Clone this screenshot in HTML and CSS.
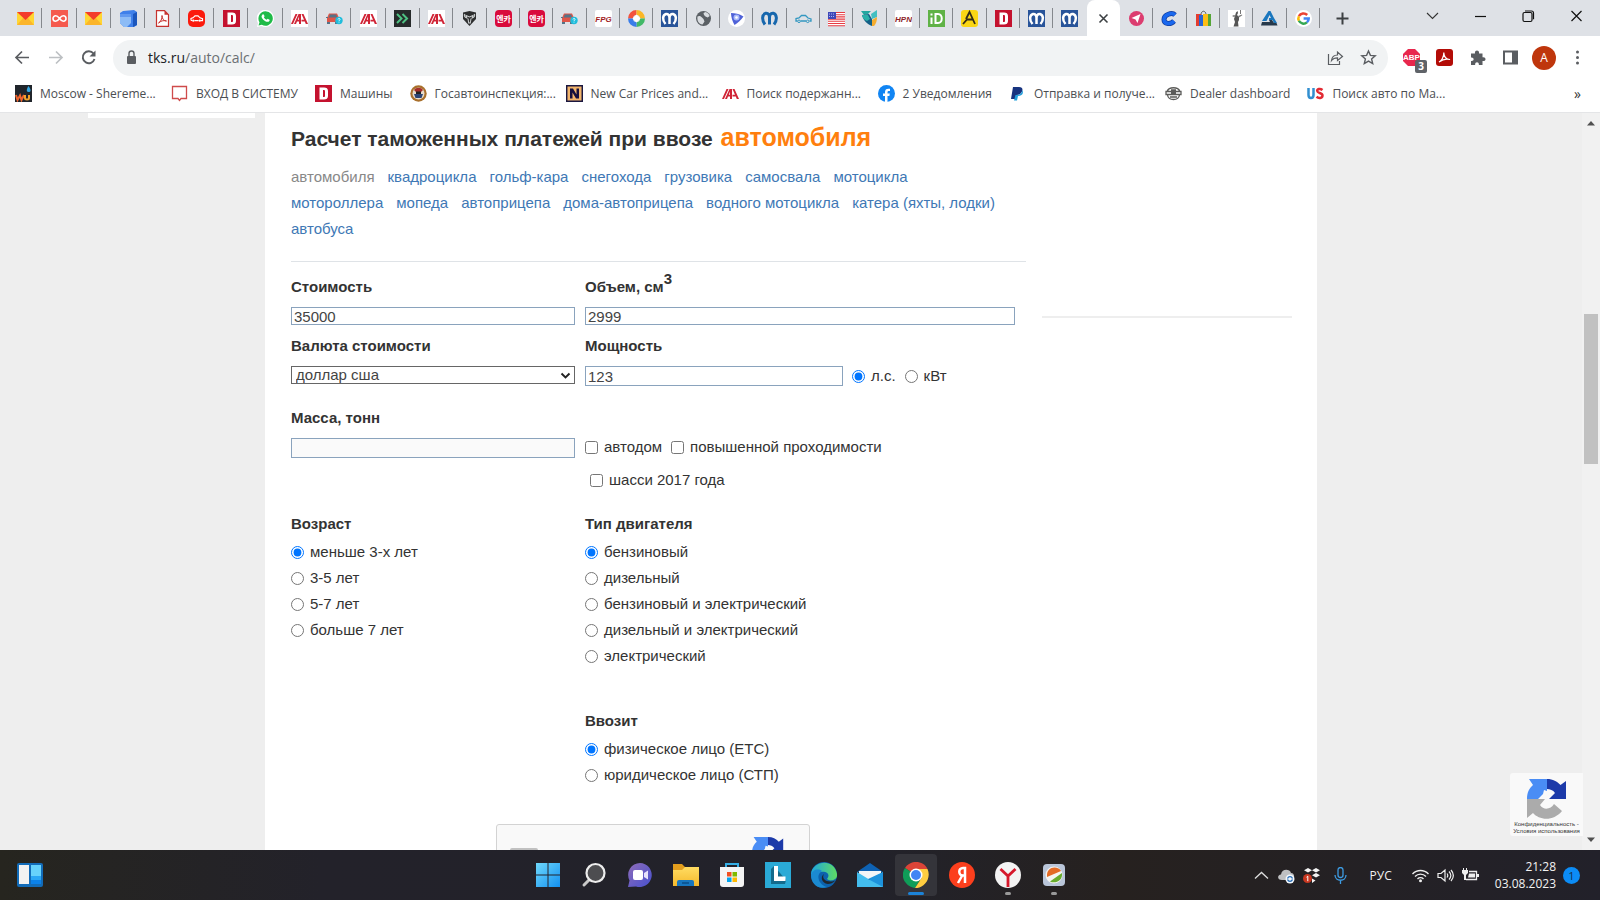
FILE: index.html
```html
<!DOCTYPE html>
<html lang="ru">
<head>
<meta charset="utf-8">
<title>Расчет таможенных платежей</title>
<link rel="stylesheet" href="styles.css">
</head>
<body>
<svg class="gradients" aria-hidden="true">
  <defs>
    <linearGradient id="gblue" x1="0" y1="0" x2="1" y2="1"><stop offset="0" stop-color="#6fd8fb"/><stop offset="1" stop-color="#1390f0"/></linearGradient>
    <linearGradient id="gedge" x1="0" y1="0" x2="1" y2="0"><stop offset="0" stop-color="#1fa6dd"/><stop offset="1" stop-color="#5fdc62"/></linearGradient>
    <linearGradient id="gchat" x1="0" y1="0" x2="1" y2="1"><stop offset="0" stop-color="#8f6cb8"/><stop offset="1" stop-color="#4650cf"/></linearGradient>
    <linearGradient id="gfold" x1="0" y1="0" x2="0" y2="1"><stop offset="0" stop-color="#ffdc62"/><stop offset="1" stop-color="#f5b92c"/></linearGradient>
  </defs>
</svg>
<svg class="sprite" aria-hidden="true">
  <symbol id="mail" viewBox="0 0 17 17"><path fill="#ffd633" d="M0 2h17v13H0z"/><path fill="#fbb52b" d="M0 15 6 8h5l6 7z"/><path fill="#f33c2b" d="M0 2h17L8.500 10z"/></symbol>
  <symbol id="loop" viewBox="0 0 17 17"><path fill="#f55a4e" d="M0 0h17v17H0z"/><path fill="none" stroke="#fff" stroke-width="1.600" d="M8.500 8.500C7 6.500 6 5.800 4.700 5.800a2.700 2.700 0 0 0 0 5.400c1.300 0 2.300-.7 3.800-2.700s2.500-2.700 3.800-2.700a2.700 2.700 0 0 1 0 5.400c-1.300 0-2.300-.7-3.800-2.700z"/></symbol>
  <symbol id="bluebox" viewBox="0 0 17 17"><path fill="#3f80ea" d="M3 1 14 0l3 2v13l-3 2H4l-4-4V3z"/><path fill="#1c57bd" d="M13 4 17 2v13l-4 2z"/><path fill="#8dbcf6" d="M0 4h11v9L7 17H4l-4-4z"/><path fill="#6099f0" d="M0 4h11v3H0z"/></symbol>
  <symbol id="pdf" viewBox="0 0 17 17"><path fill="#fff" stroke="#c6322e" stroke-width="1.200" d="M2.500.7h8l4 4v11.600h-12z"/><path fill="#c6322e" d="M10.500.7v4h4z"/><path fill="none" stroke="#c6322e" d="M4.500 13c2-1 4-4.500 3.500-7.500C8 9 10 11 12.500 11 9 10 7 11 4.500 13z"/></symbol>
  <symbol id="redcar" viewBox="0 0 17 17"><rect width="17" height="17" rx="5" fill="#fb1a0d"/><path fill="none" stroke="#fff" stroke-width="1.200" d="M3 10.500V8.500l2-.7 2-2h3l2 2 2.500.8v2H13m-2.500 0h-4M3 10.500h1"/><circle cx="5.300" cy="10.600" r="1.200" fill="#fff"/><circle cx="11.800" cy="10.600" r="1.200" fill="#fff"/></symbol>
  <symbol id="dee" viewBox="0 0 17 17"><path fill="#c4122f" d="M0 0h17v17H0z"/><path fill="#fff" fill-rule="evenodd" d="M4.500 2.500H9c2.500 0 4 1 4 3.500v5c0 2.500-1.500 3.500-4 3.500H4.500zM8 5v7h.8c1 0 1.200-.5 1.200-1.500v-4C10 5.500 9.800 5 8.800 5z"/></symbol>
  <symbol id="whats" viewBox="0 0 17 17"><path fill="#fff" d="M8.500 0a8.500 8.500 0 1 1-4 16L0 17l1-4A8.500 8.500 0 0 1 8.500 0z"/><path fill="#1fbb48" d="M8.500 1.200a7.300 7.300 0 1 1-3.700 13.600l-3.300.7 1-3.200A7.300 7.300 0 0 1 8.500 1.200z"/><path fill="#fff" d="M5.500 4.500c.6-.6 1.200-.4 1.500.4l.6 1.300-.7 1c.5 1.200 1.500 2 2.700 2.600l1-1.100 1.900 1c.6.400-.3 1.800-1.200 2C8.500 12.500 4 8.500 4.600 6z"/></symbol>
  <symbol id="iaa" viewBox="0 0 17 17"><path fill="#fff" d="M0 0h17v17H0z"/><path fill="#d02436" d="M0 14 4.500 4H6.500L2 14zM3 14 7.500 4H10v10H8v-2.500H6L5 14zM6.800 9.800H8V6.800zM10.500 4h2L17 14h-2.200l-1-2.500h-3.300V9.800H13z"/></symbol>
  <symbol id="carq" viewBox="0 0 17 17"><path fill="#df5548" d="M1 8 3 3.500h8L13 8v4H1z"/><path fill="#557388" d="M0 7h2v1H0zM3.800 4.500h6.400l1 3H2.800zM1 12h3v2H1zM9 12h3v2H9z"/><circle cx="13" cy="10.500" r="3.700" fill="#20bddc"/><path stroke="#e9fbff" fill="none" d="M12 9.500c0-1.500 2.200-1.300 2 0-.1.700-1 .7-1 1.500m0 .7v.8"/></symbol>
  <symbol id="arrows" viewBox="0 0 17 17"><path fill="#262a2b" d="M0 0h17v17H0z"/><path fill="none" stroke="#4ec183" stroke-width="2" d="m3 4 4.500 4.500L3 13M8.500 4 13 8.500 8.500 13"/></symbol>
  <symbol id="ram" viewBox="0 0 17 17"><path fill="#2d2e2f" d="M2 2.500 8.500 1 15 2.500v6.500l-6.500 7L2 9z"/><path fill="none" stroke="#c9cccd" stroke-width="1.100" d="M3.500 4c-.5 2 .8 3.500 2.300 4L5 5.500 8.500 7 12 5.500 11.200 8c1.500-.5 2.800-2 2.300-4M7 8.500l.7 4.500h1.600l.7-4.500"/></symbol>
  <symbol id="encar" viewBox="0 0 17 17"><rect width="17" height="17" rx="4" fill="#d90b3c"/><text x="8.500" y="11.500" font-size="8" font-weight="700" fill="#fff" text-anchor="middle" font-family="Noto Sans CJK KR, sans-serif">엔카</text></symbol>
  <symbol id="fpg" viewBox="0 0 17 17"><rect width="17" height="17" rx="2" fill="#fff"/><text x="8.500" y="11.500" font-size="8" font-weight="700" font-style="italic" fill="#a1201c" text-anchor="middle" font-family="Liberation Sans, sans-serif">FPG</text></symbol>
  <symbol id="ring" viewBox="0 0 17 17"><g fill="none" stroke-width="5"><path stroke="#f3523e" d="M2.500 8.500a6 6 0 0 1 6-6"/><path stroke="#fbb727" d="M8.500 2.500a6 6 0 0 1 6 6"/><path stroke="#42b968" d="M14.500 8.500a6 6 0 0 1-6 6"/><path stroke="#397de9" d="M8.500 14.500a6 6 0 0 1-6-6"/></g><path fill="#fff" d="m8.500 4.500 4 4-4 4-4-4z"/></symbol>
  <symbol id="mopar" viewBox="0 0 17 17"><path fill="#28549a" d="M0 0h17v17H0z"/><path fill="none" stroke="#fff" stroke-width="2.500" d="M4.500 14C1 10 1.500 5 5 4c2.300-.3 3.500 1.500 3.500 4v6V8c0-2.500 1.200-4.300 3.500-4 3.500 1 4 6 .5 10"/></symbol>
  <symbol id="moparb" viewBox="0 0 17 17"><path fill="none" stroke="#1767ad" stroke-width="3" d="M4 14.500C.5 10 1 4.500 4.800 3.200 7.500 2.900 8.500 5 8.500 8v6.500V8c0-3 1-5.100 3.700-4.800 3.800 1.300 4.300 6.800.8 11.300"/></symbol>
  <symbol id="globe" viewBox="0 0 17 17"><circle cx="8.500" cy="8.500" r="7.500" fill="#5b6065"/><path fill="#d9dce0" d="M2.500 6.500C4 5.500 6 6 7 7.500l1.500 1.500 1 2.500-2 3C4 14 1.800 11 2.500 6.500zM8.500 3l2-1c2.500.7 3.500 2 4.200 4l-2 1.500-2.200-1L9 5z"/></symbol>
  <symbol id="trib" viewBox="0 0 17 17"><circle cx="8.500" cy="8.500" r="8.500" fill="#fff"/><path fill="#4f62d8" d="M3 3c4 0 8 .5 12.500 3.500C13 10 10 13 6.500 15 4.500 11.500 3 7 3 3z"/><circle cx="8.500" cy="7.500" r="3" fill="#a9bafa"/><circle cx="8.500" cy="7.500" r="1.300" fill="#fff"/></symbol>
  <symbol id="carout" viewBox="0 0 17 17"><path fill="none" stroke="#3498c1" stroke-width="1.300" d="M2.500 11H1V8.500L4 8l2.500-2.500h4L13 8l3 1v2h-1.500M5.500 11H11"/><circle cx="4" cy="11.300" r="1.300" fill="none" stroke="#3498c1"/><circle cx="12.700" cy="11.300" r="1.300" fill="none" stroke="#3498c1"/></symbol>
  <symbol id="flag" viewBox="0 0 17 17"><path fill="#fff" d="M0 2h17v14H0z"/><path stroke="#e63b43" stroke-width="1.100" d="M0 2.500h17M0 4.700h17M0 6.900h17M0 9.100h17M0 11.300h17M0 13.500h17M0 15.700h17"/><path fill="#3e48b9" d="M0 2h8v7H0z"/><path stroke="#aeb4ee" stroke-dasharray="1 1" d="M1 4h6M1 6.500h6"/></symbol>
  <symbol id="leaf" viewBox="0 0 17 17"><path fill="#24a7a0" d="M0 1h10L7 4 3 5z"/><path fill="#42bfc1" d="M10 4 16 0v7l-5 2z"/><path fill="#135f86" d="M1 5 8 4l3 5v7C6 14 2 10 1 5z"/><path fill="#2bb0a8" d="M1 5h6l2 4-3 2C3 10 1.500 8 1 5z"/><path fill="#f5ad30" d="m11 10 5-3c0 4-1 7-3 9h-2z"/></symbol>
  <symbol id="hpn" viewBox="0 0 17 17"><rect width="17" height="17" rx="2" fill="#fff"/><text x="8.500" y="11.500" font-size="8" font-weight="700" font-style="italic" fill="#8d2228" text-anchor="middle" font-family="Liberation Sans, sans-serif">HPN</text></symbol>
  <symbol id="idd" viewBox="0 0 17 17"><path fill="#5fb246" d="M0 0h17v17H0z"/><path fill="none" stroke="#fff" stroke-width="2" d="M3.500 7.500V14M3.500 3.500v2M7.500 4v9H10c5 0 5-9 0-9H6.500"/></symbol>
  <symbol id="aye" viewBox="0 0 17 17"><rect width="17" height="17" rx="3" fill="#fad615"/><path fill="none" stroke="#322b18" stroke-width="1.800" d="M2 14 6 9.500h6M5 9 8.500 2 14 14"/></symbol>
  <symbol id="pink" viewBox="0 0 17 17"><circle cx="8.500" cy="8.500" r="7.500" fill="#dc3d70"/><path fill="#fff" d="m3.500 8 9-4-3 9-2-3.500z"/></symbol>
  <symbol id="cee" viewBox="0 0 17 17"><path fill="none" stroke="#113c9c" stroke-width="5" d="M14 5c-3-3-11-.5-11 4.500S10 14.500 13 11"/><path fill="none" stroke="#1a68ee" stroke-width="3.500" d="M14 5c-3-3-11-.5-11 4.500S10 14.500 13 11"/></symbol>
  <symbol id="bags" viewBox="0 0 17 17"><path fill="none" stroke="#555" d="M6 5c0-5 5-5 5 0"/><path fill="#e43d30" d="M1 4h5v12H1z"/><path fill="#2664d5" d="M4 5h5v11H4z"/><path fill="#fdbd15" d="M8 4h5v12H8z"/><path fill="#54a536" d="M13 4h3v12h-3z"/></symbol>
  <symbol id="statue" viewBox="0 0 17 17"><path fill="#fff" d="M0 0h17v17H0z"/><path fill="#555" d="M8 2.500 9.500 1l.5 2-1 2 2 2v3l-1 2 .5 4.500h-5L7 12 6 9l1-3z"/><path fill="#777" d="m4 6 2-1 2 1-2 1zM10 6l4-1.500.3.700L11 7.500zM12 0h1v4h-1z"/></symbol>
  <symbol id="tri" viewBox="0 0 17 17"><path fill="#1b77be" d="M7.500 1h2L13 8h-3L8.500 5 5.500 11H1z"/><path fill="#1b77be" d="M8 8h5l3 5h-3l-1.500-3H8z"/><path fill="#26394b" d="M1 12h8l-1-2h3l2 3h2.500l1 2.500H0z"/></symbol>
  <symbol id="goog" viewBox="0 0 17 17"><circle cx="8.500" cy="8.500" r="8.500" fill="#fff"/><g fill="none" stroke-width="2.500"><path stroke="#ea4335" d="M3.900 6.200A5.200 5.200 0 0 1 12.200 5"/><path stroke="#fbbc05" d="M3.900 6.200a5.200 5.200 0 0 0 0 4.600"/><path stroke="#34a853" d="M3.900 10.800a5.200 5.200 0 0 0 8 1.600"/><path stroke="#4285f4" d="M11.900 12.400a5.200 5.200 0 0 0 1.800-3.800H8.600"/></g></symbol>
  <symbol id="wu" viewBox="0 0 17 17"><path fill="#20252b" d="M0 0h17v17H0z"/><path fill="none" stroke="#f0642d" stroke-width="2" d="m1 10 1.500 5L5 10.500 6.500 15 9 10"/><path fill="none" stroke="#f3a22b" stroke-width="2" d="M10 10v3c0 2 4 2 4 0v-3"/><path fill="#32a8e4" d="M13.500 1c3 4 2.500 6 0 6s-2-3 0-6z"/></symbol>
  <symbol id="frame" viewBox="0 0 17 17"><path fill="#fff" stroke="#cf4b4b" stroke-width="1.300" d="M1.500 1.500h14v12H10l-1.500 2-1.500-2H1.500z"/></symbol>
  <symbol id="gai" viewBox="0 0 17 17"><circle cx="8.500" cy="8.500" r="8.200" fill="#a9702c"/><circle cx="8.500" cy="8.500" r="6" fill="#e8dccc"/><path fill="#a52e2b" d="M4 5c2-3 7-3 9 0l-2 2H6z"/><path fill="#2c4575" d="M4 9h9l-1.500 4h-6z"/><path fill="#222" d="M6 6.500h5V9H6z"/></symbol>
  <symbol id="nbox" viewBox="0 0 17 17"><path fill="#f2b56c" stroke="#1a1740" stroke-width="1.500" d="M.7.7h15.600v15.600H.7z"/><path fill="#14103e" d="M4 3.500h3l3.500 6v-6H13v10h-3l-3.500-6v6H4z"/></symbol>
  <symbol id="face" viewBox="0 0 17 17"><circle cx="8.500" cy="8.500" r="8.500" fill="#1185f3"/><path fill="#fff" d="M7 17v-6H5V8.500h2V7c0-2.500 1.500-3.700 5-3.200V6c-1.800-.2-2.500.2-2.500 1.400v1.100h2.300L11.400 11H9.500v6z"/></symbol>
  <symbol id="pay" viewBox="0 0 17 17"><path fill="#17337f" d="M4 2h6c3.500 0 4 2 3 4.500S10 10 7.500 10L6.500 14H2z"/><path fill="#23a0dc" d="M13.500 5c1.500 4-1 6-4.500 6L8 15.500H5L6.500 10c4 0 6-1 7-5z"/></symbol>
  <symbol id="deal" viewBox="0 0 17 17"><path fill="none" stroke="#5c5c5a" stroke-width="1.300" d="M2 6.500C4 1.500 13 1.500 15 6.500M1 6.500h15v3H1zM2.500 10c1 6 11 6 12 0M5 12h7M6 5h5M6 8h5"/></symbol>
  <symbol id="us" viewBox="0 0 17 17"><path fill="none" stroke="#328fd0" stroke-width="2.500" d="M1.500 3v7c0 4 5 4 5 0V3"/><path fill="none" stroke="#e22a33" stroke-width="2.500" d="M15.500 5C13 3 10 4 10.200 6c.3 2.500 5.300 1.500 5.300 4.500 0 3-4 3-6 1.300"/></symbol>
  <symbol id="recap" viewBox="0 0 40 40"><path fill="#1c3aa9" d="M20 0c6 0 10 2.500 13.500 6L39 2v18H22l6-6c-2-3-5-4-8-4z"/><path fill="#4a8df5" d="M20 0v12l-3-1-1 4-5 5H0C0 13 2.500 9 6 6L2 0z"/><path fill="#ababab" d="M0 20h18l-5 6c4 6 11 4 14-1l8 7C26 43 12 41 6 34l-6 5z"/></symbol>
</svg>

<header class="browser">
  <div class="tabstrip">
    <div class="tabs tabs-early">
      <span class="tab"><svg><use href="#mail"/></svg></span>
      <span class="tab"><svg><use href="#loop"/></svg></span>
      <span class="tab"><svg><use href="#mail"/></svg></span>
      <span class="tab"><svg><use href="#bluebox"/></svg></span>
      <span class="tab"><svg><use href="#pdf"/></svg></span>
      <span class="tab"><svg><use href="#redcar"/></svg></span>
      <span class="tab"><svg><use href="#dee"/></svg></span>
      <span class="tab"><svg><use href="#whats"/></svg></span>
      <span class="tab"><svg><use href="#iaa"/></svg></span>
      <span class="tab"><svg><use href="#carq"/></svg></span>
      <span class="tab"><svg><use href="#iaa"/></svg></span>
      <span class="tab"><svg><use href="#arrows"/></svg></span>
    </div>
    <div class="tabs tabs-late">
      <span class="tab"><svg><use href="#iaa"/></svg></span>
      <span class="tab"><svg><use href="#ram"/></svg></span>
      <span class="tab"><svg><use href="#encar"/></svg></span>
      <span class="tab"><svg><use href="#encar"/></svg></span>
      <span class="tab"><svg><use href="#carq"/></svg></span>
      <span class="tab"><svg><use href="#fpg"/></svg></span>
      <span class="tab"><svg><use href="#ring"/></svg></span>
      <span class="tab"><svg><use href="#mopar"/></svg></span>
      <span class="tab"><svg><use href="#globe"/></svg></span>
      <span class="tab"><svg><use href="#trib"/></svg></span>
      <span class="tab"><svg><use href="#moparb"/></svg></span>
      <span class="tab"><svg><use href="#carout"/></svg></span>
      <span class="tab"><svg><use href="#flag"/></svg></span>
      <span class="tab"><svg><use href="#leaf"/></svg></span>
      <span class="tab"><svg><use href="#hpn"/></svg></span>
      <span class="tab"><svg><use href="#idd"/></svg></span>
      <span class="tab"><svg><use href="#aye"/></svg></span>
      <span class="tab"><svg><use href="#dee"/></svg></span>
      <span class="tab"><svg><use href="#mopar"/></svg></span>
      <span class="tab tab-last"><svg><use href="#mopar"/></svg></span>
      <button class="tab tab-active" aria-label="Закрыть вкладку"><svg viewBox="0 0 17 17"><path fill="none" stroke="#3c4043" stroke-width="1.600" d="m4.500 4.500 8 8m0-8-8 8"/></svg></button>
      <span class="tab"><svg><use href="#pink"/></svg></span>
      <span class="tab"><svg><use href="#cee"/></svg></span>
      <span class="tab"><svg><use href="#bags"/></svg></span>
      <span class="tab"><svg><use href="#statue"/></svg></span>
      <span class="tab"><svg><use href="#tri"/></svg></span>
      <span class="tab"><svg><use href="#goog"/></svg></span>
    </div>
    <button class="newtab" aria-label="Новая вкладка"><svg viewBox="0 0 17 17"><path stroke="#3c4043" stroke-width="2" d="M8.500 2.500v12m-6-6h12"/></svg></button>
    <div class="winctl">
      <button aria-label="Поиск вкладок"><svg viewBox="0 0 17 17"><path fill="none" stroke="#333" stroke-width="1.100" d="m3 5 5.500 5.500L14 5"/></svg></button>
      <button aria-label="Свернуть"><svg viewBox="0 0 17 17"><path stroke="#111" stroke-width="1.200" d="M3 8.500h11"/></svg></button>
      <button aria-label="Развернуть"><svg viewBox="0 0 17 17"><rect x="3" y="4.500" width="9" height="9" rx="1.500" fill="none" stroke="#111" stroke-width="1.200"/><path fill="none" stroke="#111" stroke-width="1.200" d="M5 3h6.500c1.300 0 2 .7 2 2v6.300"/></svg></button>
      <button aria-label="Закрыть"><svg viewBox="0 0 17 17"><path stroke="#111" stroke-width="1.200" d="m3.500 3 10 10m0-10-10 10"/></svg></button>
    </div>
  </div>

  <div class="toolbar">
    <button class="nav" aria-label="Назад"><svg viewBox="0 0 17 17"><path fill="none" stroke="#5a5d61" stroke-width="1.700" d="M15 8.500H2.500M8 2.500l-6 6 6 6"/></svg></button>
    <button class="nav" aria-label="Вперед"><svg viewBox="0 0 17 17"><path fill="none" stroke="#bdc0c3" stroke-width="1.700" d="M2 8.500h12.500M9 2.500l6 6-6 6"/></svg></button>
    <button class="nav" aria-label="Обновить"><svg viewBox="0 0 17 17"><path fill="none" stroke="#5a5d61" stroke-width="1.900" d="M13.500 4.500a6 6 0 1 0 1 5.500"/><path fill="#5a5d61" d="M15.500 1.500V7.500H9.500z"/></svg></button>
    <div class="omnibox">
      <svg viewBox="0 0 17 17"><rect x="4" y="7" width="9" height="8" rx="1" fill="#5a5d61"/><path fill="none" stroke="#5a5d61" stroke-width="1.400" d="M6 7V4.500a2.500 2.500 0 0 1 5 0V7"/></svg>
      <span class="url"><b>tks.ru</b>/auto/calc/</span>
      <button aria-label="Поделиться"><svg viewBox="0 0 17 17"><path fill="none" stroke="#5a5d61" stroke-width="1.200" d="M1.500 5v10.500h11V12M4.500 11.500c.5-4 3-5.500 6-5.500V3l5 4.500-5 4V8.800c-2.500 0-4.500.7-6 2.700z"/></svg></button>
      <button aria-label="В закладки"><svg viewBox="0 0 17 17"><path fill="none" stroke="#5a5d61" stroke-width="1.400" d="m8.500 2 1.900 4.400 4.800.4-3.600 3.100 1.100 4.700-4.200-2.500-4.200 2.500 1.100-4.700L1.800 6.800l4.800-.4z"/></svg></button>
    </div>
    <div class="extensions">
      <button aria-label="AdBlock"><svg viewBox="0 0 17 17"><path fill="#e8274d" d="M5 0h7l5 5v7l-5 5H5l-5-5V5z"/><text x="8.500" y="11" font-size="8" font-weight="700" fill="#fff" text-anchor="middle" font-family="Liberation Sans, sans-serif">ABP</text></svg><span class="count">3</span></button>
      <button aria-label="Acrobat"><svg viewBox="0 0 17 17"><rect width="17" height="17" rx="3" fill="#b30c07"/><path fill="none" stroke="#fff" stroke-width="1.200" d="M3 13c2.500-1 5-5 4.800-9.500C8 8 10 10.500 14 10.500c-3.500-1-8 .3-11 2.500z"/></svg></button>
      <button aria-label="Расширения"><svg viewBox="0 0 17 17"><path fill="#5a5d61" d="M2 4.500h4c-.8-4 4.800-4 4 0h3.500v3.800c4-.8 4 4.500 0 3.700v4H9.800c.8-3.700-4.400-3.700-3.600 0H2v-4c3.500.6 3.500-4 0-3.500z"/></svg></button>
      <button aria-label="Боковая панель"><svg viewBox="0 0 17 17"><path fill="#5a5d61" fill-rule="evenodd" d="M1 1.500h15v14H1zM3 3.500v10h7v-10z"/></svg></button>
      <button class="avatar">A</button>
      <button aria-label="Меню"><svg viewBox="0 0 17 17"><g fill="#5a5d61"><circle cx="8.500" cy="3" r="1.500"/><circle cx="8.500" cy="8.500" r="1.500"/><circle cx="8.500" cy="14" r="1.500"/></g></svg></button>
    </div>
  </div>

  <nav class="bookmarks">
    <a class="cut" href="#"><svg><use href="#wu"/></svg>Moscow - Shereme...</a>
    <a href="#"><svg><use href="#frame"/></svg>ВХОД В СИСТЕМУ</a>
    <a href="#"><svg><use href="#dee"/></svg>Машины</a>
    <a class="cut" href="#"><svg><use href="#gai"/></svg>Госавтоинспекция:...</a>
    <a class="cut" href="#"><svg><use href="#nbox"/></svg>New Car Prices and...</a>
    <a class="cut" href="#"><svg><use href="#iaa"/></svg>Поиск подержанн...</a>
    <a href="#"><svg><use href="#face"/></svg>2 Уведомления</a>
    <a class="cut" href="#"><svg><use href="#pay"/></svg>Отправка и получе...</a>
    <a href="#"><svg><use href="#deal"/></svg>Dealer dashboard</a>
    <a class="cut" href="#"><svg><use href="#us"/></svg>Поиск авто по Ма...</a>
    <button class="more">»</button>
  </nav>
</header>

<div class="viewport">
  <div class="page">
    <aside class="side"><div class="side-card"></div></aside>
    <main class="sheet">
      <div class="calc">
        <h1>Расчет таможенных платежей при ввозе <em>автомобиля</em></h1>
        <nav class="kinds">
          <span>автомобиля</span>
          <a href="#">квадроцикла</a>
          <a href="#">гольф-кара</a>
          <a href="#">снегохода</a>
          <a href="#">грузовика</a>
          <a href="#">самосвала</a>
          <a href="#">мотоцикла</a>
          <a href="#">мотороллера</a>
          <a href="#">мопеда</a>
          <a href="#">автоприцепа</a>
          <a href="#">дома-автоприцепа</a>
          <a href="#">водного мотоцикла</a>
          <a href="#">катера (яхты, лодки)</a>
          <a href="#">автобуса</a>
        </nav>
        <form class="form">
          <div class="field">
            <label class="title" for="cost">Стоимость</label>
            <input class="box" id="cost" type="text" value="35000">
          </div>
          <div class="field">
            <label class="title" for="volume">Объем, см<sup>3</sup></label>
            <input class="box" id="volume" type="text" value="2999">
          </div>
          <div class="field">
            <label class="title" for="currency">Валюта стоимости</label>
            <div class="picker">
              <select class="box" id="currency"><option>доллар сша</option></select>
              <svg viewBox="0 0 17 17"><path fill="none" stroke="#222" stroke-width="1.900" d="m4.500 6.500 4 4 4-4"/></svg>
            </div>
          </div>
          <div class="field">
            <label class="title" for="power">Мощность</label>
            <div class="inline">
              <input class="box tall power" id="power" type="text" value="123">
              <label class="opt"><input type="radio" name="unit" checked>л.с.</label>
              <label class="opt"><input type="radio" name="unit">кВт</label>
            </div>
          </div>
          <div class="field mass">
            <label class="title" for="mass">Масса, тонн</label>
            <input class="box tall" id="mass" type="text" disabled>
          </div>
          <div class="field checks">
            <div class="inline">
              <label class="opt"><input type="checkbox">автодом</label>
              <label class="opt"><input type="checkbox">повышенной проходимости</label>
            </div>
            <label class="opt chassis"><input type="checkbox">шасси 2017 года</label>
          </div>
          <fieldset class="group">
            <legend class="title">Возраст</legend>
            <label class="opt"><input type="radio" name="age" checked>меньше 3-х лет</label>
            <label class="opt"><input type="radio" name="age">3-5 лет</label>
            <label class="opt"><input type="radio" name="age">5-7 лет</label>
            <label class="opt"><input type="radio" name="age">больше 7 лет</label>
          </fieldset>
          <fieldset class="group">
            <legend class="title">Тип двигателя</legend>
            <label class="opt"><input type="radio" name="engine" checked>бензиновый</label>
            <label class="opt"><input type="radio" name="engine">дизельный</label>
            <label class="opt"><input type="radio" name="engine">бензиновый и электрический</label>
            <label class="opt"><input type="radio" name="engine">дизельный и электрический</label>
            <label class="opt"><input type="radio" name="engine">электрический</label>
          </fieldset>
          <fieldset class="group importer">
            <legend class="title">Ввозит</legend>
            <label class="opt"><input type="radio" name="who" checked>физическое лицо (ЕТС)</label>
            <label class="opt"><input type="radio" name="who">юридическое лицо (СТП)</label>
          </fieldset>
          <div class="captcha">
            <input type="checkbox" aria-label="Я не робот">
            <svg><use href="#recap"/></svg>
          </div>
        </form>
      </div>
      <aside class="ads"><hr></aside>
    </main>
  </div>
  <div class="recaptcha-badge">
    <svg><use href="#recap"/></svg>
    <p>Конфиденциальность -<br>Условия использования</p>
  </div>
  <div class="scrollbar">
    <svg viewBox="0 0 10 6"><path fill="#505050" d="M1 5.500h8L5 1z"/></svg>
    <div class="thumb"></div>
    <svg viewBox="0 0 10 6"><path fill="#505050" d="M1 .5h8L5 5z"/></svg>
  </div>
</div>

<footer class="taskbar">
  <button class="widgets" aria-label="Виджеты"><svg viewBox="0 0 26 24"><rect width="26" height="24" rx="2" fill="#126cb9"/><path fill="#f2f2f2" d="M2 2h10v19H2z"/><path fill="#67d2fb" d="M14 2h10v11H14z"/><path fill="#2aa7f5" d="M14 13h10v4H14z"/><path fill="#0b82ea" d="M14 17h10v4H14z"/></svg></button>
  <div class="apps">
    <button aria-label="Пуск"><svg viewBox="0 0 26 26"><path fill="url(#gblue)" d="M1 1h11.500v11.500H1zM13.500 1H25v11.500H13.500zM1 13.500h11.500V25H1zM13.500 13.500H25V25H13.500z"/></svg></button>
    <button aria-label="Поиск"><svg viewBox="0 0 26 26"><path stroke="#c9c9c9" stroke-width="3" stroke-linecap="round" d="m3 23 6-6"/><circle cx="14.500" cy="11" r="9" fill="#4d4d50" stroke="#ededed" stroke-width="2.200"/></svg></button>
    <button aria-label="Чат"><svg viewBox="0 0 26 26"><path fill="url(#gchat)" d="M13 1a12 12 0 1 1-4 23.400L1 25l1.500-6.500A12 12 0 0 1 13 1z"/><rect x="6" y="8" width="10" height="10" rx="2" fill="#fff"/><path fill="#e6e2fb" d="m17 11 4-2.500v9L17 15z"/></svg></button>
    <button aria-label="Проводник"><svg viewBox="0 0 26 26"><path fill="#e39e1d" d="M0 2h9l3 3h13v5H0z"/><path fill="url(#gfold)" d="M0 8h9l3-3h14v19H0z"/><path fill="#1776bf" d="M4 24v-4q0-2 2-2h13q2 0 2 2v4z"/><path fill="#0c5796" d="M9 20h7v2H9z"/></svg></button>
    <button aria-label="Магазин"><svg viewBox="0 0 26 26"><path fill="none" stroke="#35aee5" stroke-width="2" d="M7 6V2h12v4"/><path fill="#f4f4f4" d="M1 5h24v17q0 3-3 3H4q-3 0-3-3z"/><path fill="#f25022" d="M8 10h4.500v4.500H8z"/><path fill="#7fba00" d="M13.500 10H18v4.500h-4.500z"/><path fill="#00a4ef" d="M8 15.500h4.500V20H8z"/><path fill="#ffb900" d="M13.500 15.500H18V20h-4.500z"/></svg></button>
    <button aria-label="Lenovo"><svg viewBox="0 0 26 26"><path fill="#2aaad6" d="M0 0h26v26H0z"/><path fill="#136b8c" d="m9 4-3 3v15h14l1-4z"/><path fill="#fff" d="M9 4h4v10.500h7.500V19H9z"/></svg></button>
    <button aria-label="Edge"><svg viewBox="0 0 26 26"><circle cx="13" cy="13" r="13" fill="#0c62ad"/><path fill="url(#gedge)" d="M0 12C1-1 23-5 26 12c1 6-7 8-10 5 4-5-1-8-6-7S1 14 0 12z"/><path fill="#1b8ad1" d="M0 13c1-5 7-7 11-4-7 4-3 14 5 16C6 28 0 21 0 13z"/><path fill="#20272c" d="M13 12c-3 5 3 9 10 7 0-.5.5 0 .8 0-2 2-4 3-7 3-6-1-8-7-3.800-10z"/></svg></button>
    <button aria-label="Почта"><svg viewBox="0 0 26 26"><path fill="#0e62b3" d="M0 10 13 1l13 9z"/><path fill="#f2f5f7" d="M2 9h22v8H2z"/><path fill="#43bdee" d="M0 10l13 8 13-8v15H0z"/><path fill="#1d93dd" d="M26 10v15L11 17z"/></svg></button>
    <button class="app-active" aria-label="Chrome"><svg viewBox="0 0 26 26"><path fill="#db4437" d="M13 13 2 6C8-3 21-1 24.500 7z"/><path fill="#0f9d58" d="M13 13 2 6c-6 9 1 19 10 20l6-10z"/><path fill="#ffcd40" d="M13 7h11.500C29 17 20 27 12 26l6.500-10z"/><circle cx="13" cy="13" r="6.500" fill="#fff"/><circle cx="13" cy="13" r="5" fill="#4285f4"/></svg><i></i></button>
    <button aria-label="Яндекс"><svg viewBox="0 0 26 26"><circle cx="13" cy="13" r="13" fill="#fc3f1d"/><path fill="none" stroke="#fff" stroke-width="2.500" d="M16 21V6h-2c-5 0-5 7.500 0 7.500h2M13.500 13 9 21"/></svg></button>
    <button class="app-open" aria-label="Яндекс Браузер"><svg viewBox="0 0 26 26"><circle cx="13" cy="13" r="13" fill="#f3f3f3"/><path fill="none" stroke="#d6182b" stroke-width="2.800" d="m5.500 7 7.500 7 7.500-7M13 14v11"/></svg><i></i></button>
    <button class="app-open" aria-label="Браузер"><svg viewBox="0 0 26 26"><rect x="2" y="2" width="22" height="22" rx="4" fill="#b9c5d9"/><circle cx="13" cy="13" r="8.500" fill="#f4f4f1"/><path fill="#e36b26" d="M6 15C5 3 18 4 20 9z"/><path fill="#67ac2d" d="M9 19.500 21 11c1 8-7 11-12 8.500z"/></svg><i></i></button>
  </div>
  <div class="tray">
    <button aria-label="Скрытые значки"><svg viewBox="0 0 17 17"><path fill="none" stroke="#ddd" stroke-width="1.300" d="m2 11.500 6.500-6 6.500 6"/></svg></button>
    <button aria-label="OneDrive"><svg viewBox="0 0 17 17"><path fill="#bfc0c2" d="M4 13C-1 13-1 8 3 7.500 4 1 12 2 13 6c4 0 4 6 1 7z"/><circle cx="12" cy="12" r="4.500" fill="#f4f8fc"/><path fill="none" stroke="#2169b4" stroke-width="1.300" d="M9.500 11.500c1-2.500 4-2.500 5 0m0 1c-1 2.500-4 2.500-5 0"/></svg></button>
    <button aria-label="Dropbox"><svg viewBox="0 0 17 17"><path fill="#f4f4f4" d="m5 1 4 2.300L5 5.600 1 3.300zM13 1l4 2.300-4 2.300-4-2.300zM13 6l4 2.300-4 2.300-4-2.300zM9 11.500l3.500 2L9 16z"/><circle cx="4.500" cy="11.500" r="4.500" fill="#c73720"/><path fill="none" stroke="#fff" d="m3.500 10.200 1.300-1v5"/></svg></button>
    <button class="mic" aria-label="Микрофон"><svg viewBox="0 0 17 17"><rect x="6" y="0.500" width="5" height="10" rx="2.500" fill="none" stroke="#3d9be2" stroke-width="1.300"/><path fill="none" stroke="#3d9be2" stroke-width="1.300" d="M3 8c0 7 11 7 11 0M8.500 13.500V17"/></svg></button>
    <span class="lang">РУС</span>
    <button class="status" aria-label="Сеть и звук">
      <svg viewBox="0 0 17 17"><g fill="none" stroke="#eee" stroke-width="1.400"><path d="M.5 7c4.500-4.700 11.500-4.700 16 0M3 9.500c3-3.200 8-3.200 11 0M5.500 12c1.700-1.700 4.300-1.700 6 0"/></g><circle cx="8.500" cy="13.700" r="1.500" fill="#eee"/></svg>
      <svg viewBox="0 0 17 17"><path fill="none" stroke="#eee" stroke-width="1.200" d="M1 6.500h3L8 3v11l-4-3.500H1zM10 6.500c1 1.300 1 2.700 0 4M12 4.500c2.300 2.500 2.300 5.500 0 8M14 3c3 3.500 3 7.500 0 11"/></svg>
      <svg viewBox="0 0 17 17"><path fill="#eee" d="M0 3h6v3L4 8v5H2V8L0 6z"/><path stroke="#eee" d="M1.500 1v2M4.500 1v2"/><path fill="none" stroke="#eee" stroke-width="1.300" d="M7 4.500h7.500v8H4"/><path fill="#eee" d="M7 6.500h6v4H6zM15 7h2v3h-2z"/></svg>
    </button>
    <time class="clock">21:28<br>03.08.2023</time>
    <span class="alerts">1</span>
  </div>
</footer>
</body>
</html>
```

FILE: styles.css
```css
* { box-sizing: border-box; }

body {
  margin: 0;
  height: 100vh;
  display: flex;
  flex-direction: column;
  overflow: hidden;
  font-family: "Liberation Sans", Arial, sans-serif;
  font-size: 15px;
  color: #333;
}

button {
  padding: 0;
  border: 0;
  background: none;
  color: inherit;
  font: inherit;
  display: flex;
  align-items: center;
  justify-content: center;
}

svg { display: block; width: 17px; height: 17px; flex: none; }
.gradients { position: absolute; width: 0; height: 0; }
.sprite { display: none; }

/* Browser frame */
.browser {
  flex: none;
  background: #fff;
  border-bottom: 1px solid #e4e5e7;
  font-family: "Open Sans", "Noto Sans", sans-serif;
}

.tabstrip {
  display: flex;
  height: 36px;
  padding-left: 8px;
  background: #dee1e6;
}
.tabs { display: flex; }
.tabs-early { flex: 412 1 0; }
.tabs-late { flex: 900 1 0; }
.tab {
  flex: 1 1 0;
  min-width: 0;
  display: flex;
  align-items: center;
  justify-content: center;
  background: linear-gradient(#85888d, #85888d) right 8px / 1px 20px no-repeat;
}
.tab-last { background: none; }
.tab-active { background: #fff; border-radius: 8px 8px 0 0; }
.newtab { width: 44px; }
.winctl { display: flex; padding-left: 44px; }
.winctl button { width: 48px; height: 32px; }

.toolbar {
  display: flex;
  align-items: center;
  height: 43px;
  padding: 0 6px;
}
.nav { width: 33px; height: 34px; }
.omnibox {
  flex: 1;
  display: flex;
  align-items: center;
  height: 36px;
  margin-left: 8px;
  padding: 0 3px 0 10px;
  border-radius: 18px;
  background: #f1f3f4;
}
.url { flex: 1; margin-left: 8px; font-size: 14px; color: #6b6f73; }
.url b { font-weight: 400; color: #202124; }
.omnibox button { width: 33px; height: 33px; }
.extensions { display: flex; align-items: center; margin-left: 7px; }
.extensions button { position: relative; width: 33px; height: 33px; }
.count {
  position: absolute;
  right: 1px;
  bottom: 1px;
  width: 12px;
  height: 13px;
  border-radius: 2px;
  background: #5f6368;
  color: #fff;
  font-size: 10px;
  font-weight: 700;
  line-height: 13px;
}
.extensions .avatar {
  width: 24px;
  height: 24px;
  margin: 0 5px;
  border-radius: 50%;
  background: #bf360c;
  color: #fff;
  font-size: 12px;
}

.bookmarks {
  display: flex;
  align-items: center;
  height: 33px;
  padding: 0 19px 4px 15px;
  gap: 17px;
  font-size: 12px;
  white-space: nowrap;
}
.bookmarks a {
  display: flex;
  align-items: center;
  gap: 8px;
  color: #4b4e52;
  text-decoration: none;
}
.bookmarks .cut { width: 139px; }
.more { margin-left: auto; font-size: 14px; }

/* Visible part of the page */
.viewport {
  position: relative;
  flex: 1;
  min-height: 0;
  display: flex;
  overflow: hidden;
  background: #eee;
}
.page {
  flex: 1;
  display: grid;
  grid-template-columns: 265px minmax(0, 1fr);
  padding-right: 265px;
}
.side { padding: 0 10px 0 88px; }
.side-card { height: 5px; background: #fff; }
.sheet {
  display: grid;
  grid-template-columns: minmax(0, 735fr) minmax(0, 250fr);
  gap: 16px;
  padding: 0 25px 0 26px;
  background: #fff;
}
h1 {
  margin: 0;
  padding-top: 9px;
  font-size: 21px;
  line-height: 30px;
}
h1 em {
  margin-left: 2px;
  color: #ff7f0e;
  font-size: 25px;
  font-style: normal;
}
.kinds {
  display: flex;
  flex-wrap: wrap;
  column-gap: 13px;
  padding: 10px 20px 19px 0;
  border-bottom: 1px solid #dfe3e7;
  line-height: 26px;
}
.kinds span { color: #888; }
.kinds a { color: #4078b5; text-decoration: none; }

.form {
  display: grid;
  grid-template-columns: 284px minmax(0, 1fr);
  column-gap: 10px;
  padding: 15px 11px 0 0;
}
.field { padding-bottom: 11px; }
.title {
  display: block;
  padding: 0;
  margin-bottom: 10px;
  font-weight: 700;
  line-height: 20px;
}
.title sup { font-size: 15px; line-height: 0; vertical-align: 8px; }
.box {
  display: block;
  width: 100%;
  height: 18px;
  margin: 0;
  padding: 0 2px;
  border: 1px solid #8aa3bd;
  border-radius: 0;
  background: #fff;
  color: #444;
  font: inherit;
  line-height: 16px;
}
.box:disabled { background: #fafafa; }
.picker { display: grid; align-items: center; }
.picker > * { grid-area: 1 / 1; }
.picker select { appearance: none; padding: 0 4px; border-color: #666; }
.picker svg { justify-self: end; margin-right: 1px; pointer-events: none; }
.tall { height: 20px; line-height: 18px; }
.power { width: 258px; }
.inline { display: flex; align-items: center; gap: 9px; }
.opt { display: flex; align-items: center; gap: 6px; line-height: 20px; }
.opt input { margin: 0; width: 13px; height: 13px; }
.mass { padding: 11px 0 0; }
.checks { padding: 40px 0 0; }
.chassis { margin: 13px 0 0 5px; }
.group {
  min-width: 0;
  margin: 0;
  padding: 0;
  border: 0;
}
.group .title { padding-top: 24px; margin-bottom: 5px; }
.group .opt { line-height: 26px; }
.importer { grid-column: 2; }
.importer .title { padding-top: 42px; }
.captcha {
  grid-column: 1 / -1;
  justify-self: center;
  display: flex;
  justify-content: space-between;
  width: 314px;
  height: 78px;
  margin-top: 36px;
  padding: 12px 25px 0 13px;
  border: 1px solid #d3d3d3;
  border-radius: 3px;
  background: #f9f9f9;
}
.captcha input {
  appearance: none;
  width: 28px;
  height: 28px;
  margin: 11px 0 0;
  border: 2px solid #c1c1c1;
  border-radius: 2px;
  background: #fff;
}
.captcha svg { width: 32px; height: 32px; }
.ads hr { height: 2px; margin: 203px 0 0; border: 0; background: #eee; }

.recaptcha-badge {
  position: absolute;
  right: 17px;
  bottom: 14px;
  width: 73px;
  height: 63px;
  padding-top: 6px;
  border-radius: 3px 0 0 3px;
  background: #f9f9f9;
  text-align: center;
}
.recaptcha-badge svg { width: 40px; height: 40px; margin: 0 auto; }
.recaptcha-badge p { margin: 2px 0 0; font-size: 6px; line-height: 7px; white-space: nowrap; }

.scrollbar {
  width: 18px;
  display: flex;
  flex-direction: column;
  align-items: center;
  padding: 7px 0;
  background: #f1f1f1;
}
.scrollbar svg { width: 10px; height: 6px; }
.thumb { width: 14px; height: 150px; margin: 188px 0 auto; background: #c1c1c1; }

/* Taskbar */
.taskbar {
  flex: none;
  display: grid;
  grid-template-columns: 1fr auto 1fr;
  align-items: center;
  height: 50px;
  padding: 0 16px 0 17px;
  background: linear-gradient(90deg, #26251f, #23222a 20%, #22222a 55%, #26211f 70%, #22212a);
  color: #f3f3f3;
  font-family: "Open Sans", "Noto Sans", sans-serif;
  font-size: 12px;
}
.widgets svg { width: 26px; height: 24px; }
.widgets { justify-self: start; }
.apps { display: flex; gap: 4px; }
.apps svg { width: 26px; height: 26px; }
.apps button { position: relative; width: 42px; height: 42px; border-radius: 4px; }
.apps .app-active { background: #34343a; }
.apps i {
  position: absolute;
  left: 18px;
  bottom: 1px;
  width: 6px;
  height: 3px;
  border-radius: 2px;
  background: #999;
}
.apps .app-active i { left: 13px; width: 16px; background: #1c83d8; }
.tray { display: flex; align-items: center; justify-content: flex-end; }
.tray button { width: 25px; height: 34px; }
.tray .mic { width: 34px; }
.lang { margin: 0 20px 0 12px; }
.tray .status { width: auto; gap: 8px; margin-right: 16px; }
.clock { text-align: right; line-height: 17px; }
.alerts {
  width: 17px;
  height: 17px;
  margin: 0 4px 0 7px;
  border-radius: 50%;
  background: #0c8cf5;
  color: #17304a;
  font-size: 11px;
  line-height: 17px;
  text-align: center;
}
```
